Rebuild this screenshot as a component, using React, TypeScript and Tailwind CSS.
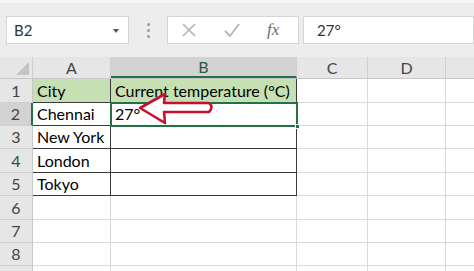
import React from "react";

const cols = [
  { w: 78, label: "A" },
  { w: 186, label: "B" },
  { w: 71, label: "C" },
  { w: 78, label: "D" },
  { w: 60, label: "" },
];
const rowHeights = [24, 23, 23, 24, 23, 24, 23, 23, 23];

export default function App() {
  const font = { fontFamily: "Lato, 'Open Sans', sans-serif" };
  return (
    <div className="relative w-[474px] h-[271px] overflow-hidden bg-[#ededed]" style={font}>
      {/* top strip */}
      <div className="h-[3px] bg-[#f6f6f6]" />
      {/* formula bar */}
      <div className="flex items-center h-[28px] mt-[13px] pl-[6px]">
        <div className="relative shrink-0 w-[123px] h-[28px] bg-white border border-[#d6d6d6] flex items-center pl-[7px] text-[15px] text-[#333]">
          B2
          <div className="absolute right-[9px] top-[12px] w-0 h-0 border-l-[3px] border-r-[3px] border-t-[4px] border-l-transparent border-r-transparent border-t-[#555]" />
        </div>
        <div className="shrink-0 w-[38px] flex flex-col items-center gap-[3px]">
          <div className="w-[3px] h-[3px] rounded-full bg-[#9a9a9a]" />
          <div className="w-[3px] h-[3px] rounded-full bg-[#9a9a9a]" />
          <div className="w-[3px] h-[3px] rounded-full bg-[#9a9a9a]" />
        </div>
        <div className="shrink-0 w-[132px] h-[28px] bg-white border border-[#d6d6d6] flex items-center">
          <svg width="16" height="16" viewBox="0 0 16 16" className="ml-[13px]">
            <path d="M2 2 L14 14 M14 2 L2 14" stroke="#b4b4b4" strokeWidth="1.6" fill="none" />
          </svg>
          <svg width="18" height="16" viewBox="0 0 18 16" className="ml-[26px]">
            <path d="M2 9 L7 14 L16 2" stroke="#b4b4b4" strokeWidth="1.8" fill="none" />
          </svg>
          <span
            className="ml-[26px] text-[17px] italic text-[#6e6e6e]"
            style={{ fontFamily: "'Liberation Serif', serif" }}
          >
            fx
          </span>
        </div>
        <div className="flex-1 h-[28px] ml-[4px] bg-white border border-[#d6d6d6] flex items-center pl-[13px] text-[15px] text-[#333]">
          27°
        </div>
      </div>
      {/* grid */}
      <div className="mt-[13px] bg-white">
        {/* column headers */}
        <div className="flex h-[22px] bg-[#e6e6e6] border-b border-[#c8c8c8]">
          <div className="relative shrink-0 w-[33px] border-r border-[#cfcfcf] flex items-end justify-end pr-[3px] pb-[3px]">
            <svg width="13" height="13" viewBox="0 0 13 13">
              <path d="M13 0 L13 13 L0 13 Z" fill="#c4c4c4" />
            </svg>
          </div>
          {cols.map((c, i) => (
            <div
              key={i}
              className={
                "shrink-0 flex items-center justify-center text-[16px] border-r border-[#cfcfcf] " +
                (i === 1 ? "bg-[#d3d3d3] border-b-2 border-b-[#217346] text-[#2a5a3e]" : "text-[#444]")
              }
              style={{ width: c.w }}
            >
              {c.label}
            </div>
          ))}
        </div>
        {rowHeights.map((h, r) => {
          const rowNum = r + 1;
          const inTable = rowNum <= 5;
          return (
            <div key={r} className="flex" style={{ height: h }}>
              <div
                className={
                  "shrink-0 w-[33px] flex items-center justify-center text-[16px] border-b border-[#d0d0d0] " +
                  (rowNum === 2
                    ? "bg-[#d3d3d3] border-r-2 border-r-[#217346] text-[#444]"
                    : "bg-[#e6e6e6] border-r border-r-[#c8c8c8] text-[#444]")
                }
              >
                {rowNum <= 8 ? rowNum : ""}
              </div>
              {cols.map((c, i) => {
                const tableCell = inTable && i <= 1;
                const header = rowNum === 1 && i <= 1;
                let text = "";
                if (i === 0) text = ["City", "Chennai", "New York", "London", "Tokyo"][r] || "";
                if (i === 1 && rowNum === 1) text = "Current temperature (°C)";
                if (i === 1 && rowNum === 2) text = "27°";
                return (
                  <div
                    key={i}
                    className={
                      "shrink-0 flex items-center pl-[4px] text-[16px] text-black whitespace-nowrap overflow-visible " +
                      (header ? "bg-[#c6e0b4] " : "") +
                      (tableCell ? "border-r border-r-[#3a3a3a] " : "border-r border-r-[#d9d9d9] ") +
                      (tableCell ? "border-b border-b-[#3a3a3a]" : "border-b border-b-[#d9d9d9]")
                    }
                    style={{ width: c.w }}
                  >
                    {text}
                  </div>
                );
              })}
            </div>
          );
        })}
      </div>
      {/* selection B2 */}
      <div className="absolute left-[110px] top-[102px] w-[188px] h-[25px] border-2 border-[#217346] pointer-events-none" />
      <div className="absolute left-[295px] top-[124px] w-[5px] h-[5px] bg-[#217346] border border-white" />
      {/* red arrow */}
      <svg className="absolute left-0 top-0 pointer-events-none" width="474" height="271">
        <path
          d="M140 108 L165 94 L164 103 L209 103 Q214 107 209 112 L164 112 L165 123 Z"
          fill="white"
          stroke="#c8102e"
          strokeWidth="2.6"
          strokeLinejoin="round"
        />
      </svg>
    </div>
  );
}
